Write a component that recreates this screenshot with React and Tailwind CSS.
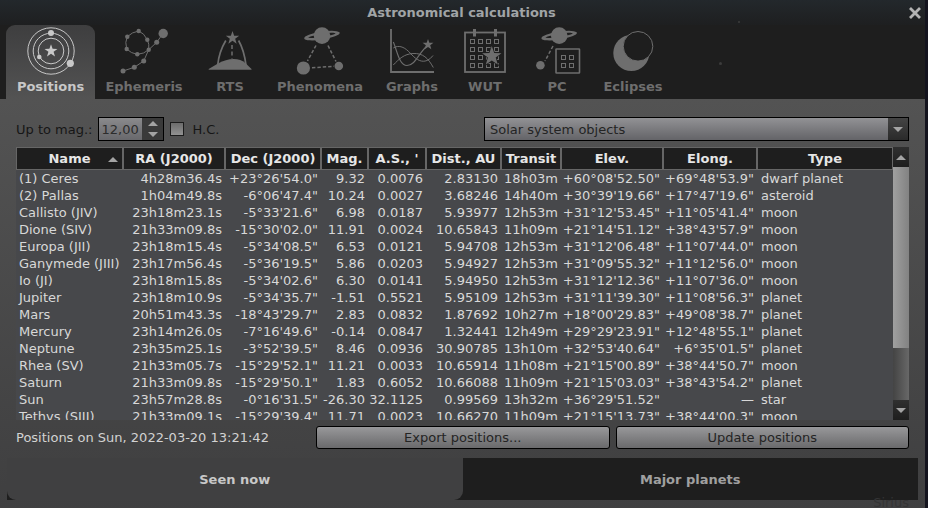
import { useState } from "react";

const STAR =
  "M0 -1 L0.235 -0.324 L0.951 -0.309 L0.38 0.124 L0.588 0.809 L0 0.4 L-0.588 0.809 L-0.38 0.124 L-0.951 -0.309 L-0.235 -0.324 Z";

function Star({ x, y, r }) {
  return <path d={STAR} transform={`translate(${x} ${y}) scale(${r})`} fill="currentColor" stroke="none" />;
}

function Dots({ points }) {
  return points.map(([x, y, r]) => <circle key={`${x}-${y}`} cx={x} cy={y} r={r} fill="currentColor" stroke="none" />);
}

function Saturn({ x, y }) {
  return (
    <g transform={`translate(${x} ${y})`} stroke="none" fill="currentColor">
      <path
        transform="rotate(-9)"
        fillRule="evenodd"
        d="M-18 0 A18 3.9 0 0 1 18 0 A18 3.9 0 0 1 -18 0 Z M-13.8 -0.2 A13.8 1.5 0 0 0 13.8 -0.2 A13.8 1.5 0 0 0 -13.8 -0.2 Z"
      />
      <circle r="8.3" />
    </g>
  );
}

function Icon({ box, children }) {
  return (
    <svg viewBox={box} className="h-12 w-12 shrink-0" fill="none" stroke="currentColor" strokeWidth="1" aria-hidden="true">
      {children}
    </svg>
  );
}

const PositionsIcon = () => (
  <Icon box="26 27 48 48">
    <circle cx="50" cy="51" r="23.2" />
    <circle cx="50" cy="51" r="17.8" />
    <circle cx="50" cy="51" r="12.8" />
    <Dots points={[[50, 33, 3], [38.3, 57, 2.3], [69.3, 63.3, 3.6]]} />
    <Star x={50} y={51} r={6.8} />
  </Icon>
);

const EphemerisIcon = () => (
  <Icon box="120 27 48 48">
    <path d="M138.7 31 Q144 33 147.3 39.7 Q149.5 44 148.7 49.7 Q144 54 137.3 54.3 Q131 53.5 126.7 49 Q124.6 42 127.3 36.7 Q132 32 138.7 31 M163 33.5 L156.7 42.3 L148.7 49.7 L143.7 61 L134.3 67.3 L123 71" />
    <Dots
      points={[
        [138.7, 31, 2.2], [147.3, 39.7, 2.2], [148.7, 49.7, 2.2], [137.3, 54.3, 2.2], [126.7, 49, 2.2], [127.3, 36.7, 2.2],
        [163.2, 33.5, 4.7], [156.7, 42.3, 2.5], [143.7, 61, 2.5], [134.3, 67.3, 2.5], [123, 71, 2.5],
      ]}
    />
  </Icon>
);

const RtsIcon = () => (
  <Icon box="206 27 48 48">
    <Star x={232.5} y={38} r={7} />
    <path d="M225.8 40.5 Q219 52 217.7 65 M238.6 40.5 Q244 50 246 65" strokeWidth="1.7" />
    <path d="M232 45 V58.5" strokeWidth="1.5" strokeDasharray="4 2.5" />
    <path d="M208.7 69.7 V69 L218 63.6 Q226 59 233.5 59 Q241 59 245.3 63 L251.5 69 V69.7 Z" fill="currentColor" stroke="none" />
  </Icon>
);

const PhenomenaIcon = () => (
  <Icon box="296 27 48 48">
    <Saturn x={322} y={35.6} />
    <path d="M316 45.5 L307.5 61 M328 45.5 L336 61.5 M312 67.8 L334 66.3" strokeWidth="1.5" strokeDasharray="3.4 2" />
    <Dots points={[[303.4, 68, 6.6], [338.8, 66, 4.3]]} />
  </Icon>
);

const GraphsIcon = () => (
  <Icon box="388 27 48 48">
    <path d="M391 29 V72 H434" strokeWidth="1.8" />
    <path d="M393.3 42 C397 50 399 65.5 407 65.5 C415 65.5 418 54 427 46" strokeWidth="1.1" />
    <path d="M393.3 48 C399 44.5 405 47 411 54 C417 60.5 422 62.5 427 60.5 Q430.5 59 433 55.5" />
    <path d="M393.3 65 C399 59 404 54 413 53.5 C423 53 428 58 433.3 67.5" />
    <Star x={428} y={44.6} r={5.7} />
  </Icon>
);

const WUT_COLUMNS = [470.5, 478.5, 486.5, 494.5];
const WUT_ROWS = [39.5, 47.5, 55.5, 63.5];

const WutIcon = () => (
  <Icon box="461 27 48 48">
    <rect x="465" y="32.5" width="40" height="39.5" strokeWidth="1.8" />
    <path d="M474.5 29 V36.5 M495.5 29 V36.5" strokeWidth="3" />
    {WUT_ROWS.map((y) => WUT_COLUMNS.map((x) => <rect key={`${x}-${y}`} x={x} y={y} width="4" height="4" />))}
    <path d={STAR} transform="translate(491.8 56.3) scale(12.5)" fill="#1e1e1e" stroke="none" />
    <Star x={491.8} y={56.3} r={10.2} />
  </Icon>
);

const PcIcon = () => (
  <Icon box="533 27 48 48">
    <Saturn x={559.2} y={35.6} />
    <path d="M553 46 L545 61" strokeWidth="1.5" strokeDasharray="3.4 2" />
    <Dots points={[[540.4, 65.2, 4.3]]} />
    <rect x="556" y="49" width="23.5" height="24" rx="0.5" strokeWidth="1.6" />
    {[561.5, 569.5].map((x) => [55.5, 63.5].map((y) => <rect key={`${x}-${y}`} x={x} y={y} width="4" height="4" />))}
  </Icon>
);

const EclipsesIcon = () => (
  <Icon box="609 27 48 48">
    <circle cx="631.3" cy="53" r="18" fill="currentColor" stroke="none" />
    <circle cx="638" cy="46.3" r="14.8" fill="#1e1e1e" />
  </Icon>
);

const TABS = [
  { label: "Positions", icon: PositionsIcon, width: "w-[89px]" },
  { label: "Ephemeris", icon: EphemerisIcon, width: "w-[98px]" },
  { label: "RTS", icon: RtsIcon, width: "w-[74px]" },
  { label: "Phenomena", icon: PhenomenaIcon, width: "w-[106px]" },
  { label: "Graphs", icon: GraphsIcon, width: "w-[78px]" },
  { label: "WUT", icon: WutIcon, width: "w-[68px]" },
  { label: "PC", icon: PcIcon, width: "w-[76px]" },
  { label: "Eclipses", icon: EclipsesIcon, width: "w-[76px]" },
];

const COLUMNS = [
  { label: "Name", width: "w-[108px]", sorted: true },
  { label: "RA (J2000)", width: "w-[102px]" },
  { label: "Dec (J2000)", width: "w-[96px]" },
  { label: "Mag.", width: "w-[47px]" },
  { label: "A.S., '", width: "w-[58px]" },
  { label: "Dist., AU", width: "w-[75px]" },
  { label: "Transit", width: "w-[60px]" },
  { label: "Elev.", width: "w-[102px]" },
  { label: "Elong.", width: "w-[94px]" },
  { label: "Type", width: "" },
];

const ROWS = [
  ["(1) Ceres", "4h28m36.4s", "+23°26'54.0\"", "9.32", "0.0076", "2.83130", "18h03m", "+60°08'52.50\"", "+69°48'53.9\"", "dwarf planet"],
  ["(2) Pallas", "1h04m49.8s", "-6°06'47.4\"", "10.24", "0.0027", "3.68246", "14h40m", "+30°39'19.66\"", "+17°47'19.6\"", "asteroid"],
  ["Callisto (JIV)", "23h18m23.1s", "-5°33'21.6\"", "6.98", "0.0187", "5.93977", "12h53m", "+31°12'53.45\"", "+11°05'41.4\"", "moon"],
  ["Dione (SIV)", "21h33m09.8s", "-15°30'02.0\"", "11.91", "0.0024", "10.65843", "11h09m", "+21°14'51.12\"", "+38°43'57.9\"", "moon"],
  ["Europa (JII)", "23h18m15.4s", "-5°34'08.5\"", "6.53", "0.0121", "5.94708", "12h53m", "+31°12'06.48\"", "+11°07'44.0\"", "moon"],
  ["Ganymede (JIII)", "23h17m56.4s", "-5°36'19.5\"", "5.86", "0.0203", "5.94927", "12h53m", "+31°09'55.32\"", "+11°12'56.0\"", "moon"],
  ["Io (JI)", "23h18m15.8s", "-5°34'02.6\"", "6.30", "0.0141", "5.94950", "12h53m", "+31°12'12.36\"", "+11°07'36.0\"", "moon"],
  ["Jupiter", "23h18m10.9s", "-5°34'35.7\"", "-1.51", "0.5521", "5.95109", "12h53m", "+31°11'39.30\"", "+11°08'56.3\"", "planet"],
  ["Mars", "20h51m43.3s", "-18°43'29.7\"", "2.83", "0.0832", "1.87692", "10h27m", "+18°00'29.83\"", "+49°08'38.7\"", "planet"],
  ["Mercury", "23h14m26.0s", "-7°16'49.6\"", "-0.14", "0.0847", "1.32441", "12h49m", "+29°29'23.91\"", "+12°48'55.1\"", "planet"],
  ["Neptune", "23h35m25.1s", "-3°52'39.5\"", "8.46", "0.0936", "30.90785", "13h10m", "+32°53'40.64\"", "+6°35'01.5\"", "planet"],
  ["Rhea (SV)", "21h33m05.7s", "-15°29'52.1\"", "11.21", "0.0033", "10.65914", "11h08m", "+21°15'00.89\"", "+38°44'50.7\"", "moon"],
  ["Saturn", "21h33m09.8s", "-15°29'50.1\"", "1.83", "0.6052", "10.66088", "11h09m", "+21°15'03.03\"", "+38°43'54.2\"", "planet"],
  ["Sun", "23h57m28.8s", "-0°16'31.5\"", "-26.30", "32.1125", "0.99569", "13h32m", "+36°29'51.52\"", "—", "star"],
  ["Tethys (SIII)", "21h33m09.1s", "-15°29'39.4\"", "11.71", "0.0023", "10.66270", "11h09m", "+21°15'13.73\"", "+38°44'00.3\"", "moon"],
];

function Triangle({ down = false }) {
  return (
    <svg viewBox="0 0 10 5" className="h-[5px] w-[10px] text-[#a4a4a4]" aria-hidden="true">
      <path d={down ? "M0 0 H10 L5 5 Z" : "M0 5 H10 L5 0 Z"} fill="currentColor" />
    </svg>
  );
}

function ObjectTable() {
  return (
    <div className="flex h-[273px] bg-[#47484b]">
      <div className="min-w-0 flex-1 overflow-hidden">
        <table className="w-full table-fixed border-separate border-spacing-0 text-[#d8d8d8]">
          <thead>
            <tr>
              {COLUMNS.map((col) => (
                <th
                  key={col.label}
                  className={`relative h-[23px] border-y border-r-2 border-y-[#666] border-r-[#666] bg-[#1e1e1e] p-0 text-center leading-[17px] font-bold whitespace-nowrap text-[#e6e6e6] first:border-l first:border-l-[#666] last:border-r ${col.width}`}
                >
                  {col.label}
                  {col.sorted && (
                    <span className="absolute top-[9px] right-1">
                      <Triangle />
                    </span>
                  )}
                </th>
              ))}
            </tr>
          </thead>
          <tbody>
            {ROWS.map((row) => (
              <tr key={row[0]}>
                {row.map((cell, i) => (
                  <td
                    key={COLUMNS[i].label}
                    className={`py-0 leading-[17px] whitespace-nowrap ${i === 0 || i === 9 ? "pr-0 pl-[3px] text-left" : "pr-1 pl-0 text-right"}`}
                  >
                    {cell}
                  </td>
                ))}
              </tr>
            ))}
          </tbody>
        </table>
      </div>
      <div className="flex w-4 shrink-0 flex-col bg-linear-to-r from-[#444] to-[#686868]">
        <button type="button" aria-label="Scroll up" className="flex h-5 items-center justify-center bg-linear-to-b from-[#303030] to-[#1e1e1e]">
          <Triangle />
        </button>
        <div className="h-[181px] bg-linear-to-r from-[#a0a0a0] to-[#828282]" />
        <button type="button" aria-label="Scroll down" className="mt-auto flex h-5 items-center justify-center bg-linear-to-b from-[#303030] to-[#1e1e1e]">
          <Triangle down />
        </button>
      </div>
    </div>
  );
}

const pushButton =
  "h-[23px] flex-1 rounded-[3px] border border-black bg-linear-to-b from-[#98989a] to-[#6a6a6c] leading-[17px] text-[#242424]";

export default function App() {
  const [tab, setTab] = useState("Positions");
  const [magnitude, setMagnitude] = useState("12,00");

  return (
    <div className="min-h-screen bg-[#14141e] pr-[3px] font-['DejaVu_Sans',sans-serif] text-[13px] leading-[17px]">
      <div className="relative flex min-h-screen flex-col overflow-hidden bg-[#1e1e1e]">
        <header className="flex h-[25px] items-center bg-linear-to-b from-[#23282c] to-[#1e1f20] pl-[18px]">
          <h1 className="flex-1 text-center font-bold text-[#a0a4a6]">Astronomical calculations</h1>
          <button type="button" aria-label="Close" className="flex h-6 w-5 items-center justify-center text-[#b4b4b4]">
            <svg viewBox="0 0 12 12" className="h-3 w-3" fill="none" stroke="currentColor" strokeWidth="2.8" aria-hidden="true">
              <path d="M1 1 L11 11 M11 1 L1 11" />
            </svg>
          </button>
        </header>

        <nav className="flex h-[74px] shrink-0 pl-[6px]">
          {TABS.map(({ label, icon: TabIcon, width }) => (
            <button
              key={label}
              type="button"
              onClick={() => setTab(label)}
              className={`flex shrink-0 flex-col items-center gap-[3px] rounded-t-[9px] pt-[2px] font-bold ${width} ${
                tab === label ? "bg-linear-to-b from-[#3e3e3f] to-[#535353] text-[#c8c8c8]" : "text-[#6e6e6e]"
              }`}
            >
              <TabIcon />
              <span className="leading-[17px]">{label}</span>
            </button>
          ))}
        </nav>

        <main className="flex flex-1 flex-col bg-linear-to-b from-[#535353] to-[#3f3f40]">
          <div className="flex flex-col px-4 pt-[18px]">
            <div className="flex h-6 items-center">
              <label htmlFor="magnitude" className="text-[#161616]">
                Up to mag.:
              </label>
              <div className="ml-[6px] flex h-6 w-[66px] border border-black bg-[#3a3a3a]">
                <input
                  id="magnitude"
                  type="text"
                  value={magnitude}
                  onChange={(event) => setMagnitude(event.target.value)}
                  className="w-[43px] bg-linear-to-b from-[#8a8a8c] to-[#68686c] pl-[2px] text-[#2c2c2c] outline-none"
                />
                <div className="flex flex-1 flex-col items-center justify-between py-[3px]">
                  <button type="button" aria-label="Increase magnitude" className="flex">
                    <Triangle />
                  </button>
                  <button type="button" aria-label="Decrease magnitude" className="flex">
                    <Triangle down />
                  </button>
                </div>
              </div>
              <label className="ml-[6px] flex items-center gap-2 text-[#161616]">
                <input
                  type="checkbox"
                  className="h-[14px] w-[14px] appearance-none border border-[#1c1c1c] bg-linear-to-b from-[#6c6c6c] to-[#929292] checked:from-[#d0d0d0] checked:to-[#f0f0f0]"
                />
                H.C.
              </label>
              <div className="relative ml-auto h-6 w-[425px]">
                <select
                  aria-label="Object group"
                  className="h-6 w-full appearance-none border border-black bg-linear-to-b from-[#929295] to-[#646468] pl-[5px] text-[#242424] outline-none"
                >
                  <option>Solar system objects</option>
                </select>
                <span className="pointer-events-none absolute top-px right-px flex h-[22px] w-5 items-center justify-center bg-linear-to-b from-[#444] to-[#2a2a2a]">
                  <Triangle down />
                </span>
              </div>
            </div>

            <div className="mt-[6px]">
              <ObjectTable />
            </div>

            <div className="mt-[6px] flex h-[23px] items-center gap-[6px]">
              <p className="w-[294px] text-[#d2d2d2]">Positions on Sun, 2022-03-20 13:21:42</p>
              <button type="button" className={pushButton}>
                Export positions...
              </button>
              <button type="button" className={pushButton}>
                Update positions
              </button>
            </div>
          </div>

          <div className="mx-[7px] mt-[9px] flex h-[42px] bg-[#1e1e1e] font-bold">
            <button type="button" className="flex-1 rounded-b-[9px] bg-[#404041] text-[#c8c8c8]">
              Seen now
            </button>
            <button type="button" className="flex-1 text-[#a0a0a0]">
              Major planets
            </button>
          </div>
        </main>

        <span className="absolute top-[21px] left-[738px] h-[2px] w-[2px] rounded-full bg-[#3c3c3c]" />
        <span className="absolute top-[62px] left-[719px] h-[3px] w-[3px] rounded-full bg-[#3c3c3c]" />
        <span className="pointer-events-none absolute right-4 -bottom-[3px] text-[#343435]" aria-hidden="true">
          Sirius
        </span>
      </div>
    </div>
  );
}
